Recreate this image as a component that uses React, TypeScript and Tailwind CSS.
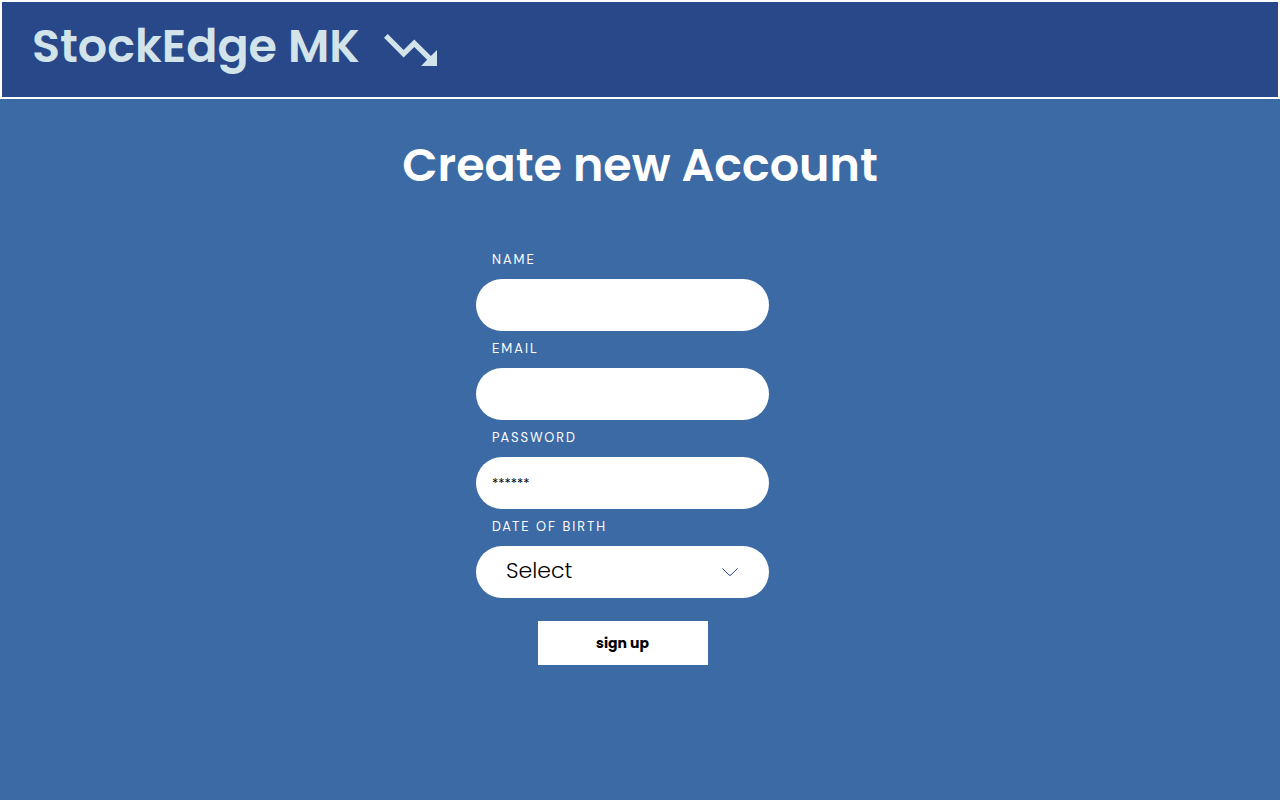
import type { ReactNode } from "react";

const controlClass =
  "block h-[52px] w-full appearance-none rounded-full bg-white text-black outline-none focus-visible:ring-2 focus-visible:ring-[#28488a]";

function Field({ id, label, children }: { id: string; label: string; children: ReactNode }) {
  return (
    <div className="flex flex-col gap-[9px]">
      <label htmlFor={id} className="pl-4 text-[13px] leading-5 tracking-[2px] text-white uppercase">
        {label}
      </label>
      {children}
    </div>
  );
}

function TrendingDownIcon() {
  return (
    <svg viewBox="2 6 20 12" className="h-8 w-[53px] shrink-0" fill="currentColor" aria-hidden="true">
      <path d="M16 18l2.29-2.29-4.88-4.88-4 4L2 7.41 3.41 6l6 6 4-4 6.3 6.29L22 12v6z" />
    </svg>
  );
}

export default function App() {
  return (
    <div className="min-h-screen bg-[#3c6aa5] font-['Poppins','Inter',sans-serif]">
      <header className="flex h-[99px] items-start gap-6 border-2 border-white bg-[#28488a] px-[30px] pt-3 text-[#d2e4ea]">
        <span className="text-[46px] leading-[64px] font-semibold">StockEdge MK</span>
        <div className="flex h-[71px] items-center">
          <TrendingDownIcon />
        </div>
      </header>

      <main className="flex flex-col items-center px-4 pt-[34px] pb-16">
        <h1 className="text-center text-[46px] leading-[64px] font-semibold text-white">Create new Account</h1>

        <form className="mt-[53px] mr-[35px] flex w-full max-w-[293px] flex-col gap-2 font-['DM_Sans','Inter',sans-serif]">
          <Field id="name" label="Name">
            <input id="name" type="text" className={`${controlClass} px-4 text-[13px]`} />
          </Field>
          <Field id="email" label="Email">
            <input id="email" type="email" className={`${controlClass} px-4 text-[13px]`} />
          </Field>
          <Field id="password" label="Password">
            <input
              id="password"
              type="password"
              placeholder="******"
              className={`${controlClass} px-4 text-[13px] placeholder:text-black`}
            />
          </Field>
          <Field id="birth" label="Date of birth">
            <div className="relative">
              <select
                id="birth"
                className={`${controlClass} px-[30px] pb-1 font-['Poppins','Inter',sans-serif] text-[22px] font-light`}
              >
                <option>Select</option>
              </select>
              <svg
                viewBox="0 0 16 8"
                className="pointer-events-none absolute top-[22px] right-[31px] h-2 w-4"
                fill="none"
                stroke="#28488a"
                strokeLinecap="round"
                strokeLinejoin="round"
                aria-hidden="true"
              >
                <path d="M.6.6 7 6.9Q8 7.9 9 6.9L15.4.6" />
              </svg>
            </div>
          </Field>
          <button
            type="submit"
            className="mt-[15px] h-11 w-[170px] self-center bg-white font-['Poppins','Inter',sans-serif] text-sm font-bold text-black"
          >
            sign up
          </button>
        </form>
      </main>
    </div>
  );
}
